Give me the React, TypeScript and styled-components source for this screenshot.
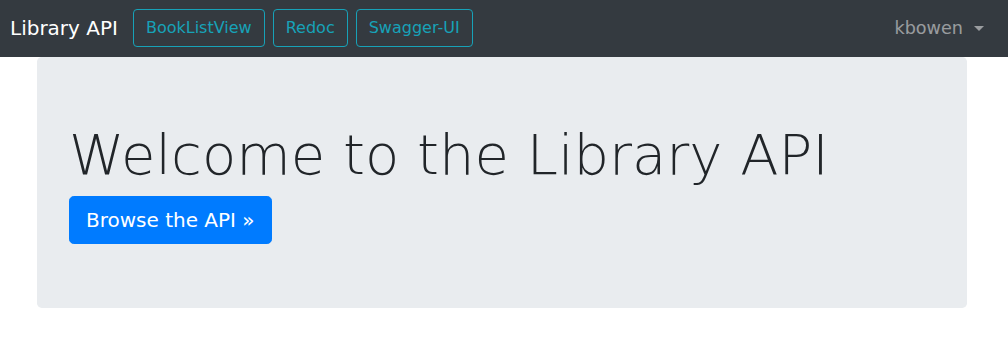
import React from "react";
import styled, { createGlobalStyle } from "styled-components";

const Global = createGlobalStyle`
  * { box-sizing: border-box; }
  body {
    margin: 0;
    font-family: "DejaVu Sans", sans-serif;
    font-size: 16px;
    line-height: 1.5;
    color: #212529;
    background: #fff;
  }
`;

const Navbar = styled.nav`
  display: flex;
  align-items: center;
  height: 57px;
  padding: 0 16px 1px 10px;
  background: #343a40;
`;

const Brand = styled.a`
  font-size: 20px;
  line-height: 30px;
  color: #fff;
  margin-right: 15px;
  text-decoration: none;
`;

const NavButtons = styled.div`
  display: flex;
  gap: 8px;
`;

const OutlineButton = styled.a`
  display: inline-block;
  padding: 6px 12px;
  font-size: 16px;
  line-height: 24px;
  color: #17a2b8;
  border: 1px solid #17a2b8;
  border-radius: 4px;
  text-decoration: none;
`;

const UserMenu = styled.a`
  margin-left: auto;
  padding: 8px;
  color: rgba(255, 255, 255, 0.5);
  font-size: 17.6px;
  line-height: 26px;
  text-decoration: none;
  display: flex;
  align-items: center;
`;

const Caret = styled.span`
  display: inline-block;
  margin-left: 11px;
  margin-top: 1px;
  width: 0;
  height: 0;
  border-top: 5px solid currentColor;
  border-left: 5px solid transparent;
  border-right: 5px solid transparent;
`;

const Jumbotron = styled.div`
  margin-left: 37px;
  width: 930px;
  padding: 64px 32px;
  background: #e9ecef;
  border-radius: 4.8px;
`;

const Display = styled.h1`
  margin: 0 0 8px;
  font-size: 56px;
  font-weight: 300;
  line-height: 1.2;
  color: #212529;
`;

const PrimaryButton = styled.a`
  display: inline-block;
  padding: 8px 16px;
  font-size: 20px;
  line-height: 30px;
  color: #fff;
  background: #007bff;
  border: 1px solid #007bff;
  border-radius: 4.8px;
  text-decoration: none;
`;

export default function App() {
  return (
    <>
      <Global />
      <Navbar>
        <Brand>Library API</Brand>
        <NavButtons>
          <OutlineButton>BookListView</OutlineButton>
          <OutlineButton>Redoc</OutlineButton>
          <OutlineButton>Swagger-UI</OutlineButton>
        </NavButtons>
        <UserMenu>
          kbowen
          <Caret />
        </UserMenu>
      </Navbar>
      <Jumbotron>
        <Display>Welcome to the Library API</Display>
        <PrimaryButton>Browse the API »</PrimaryButton>
      </Jumbotron>
    </>
  );
}
